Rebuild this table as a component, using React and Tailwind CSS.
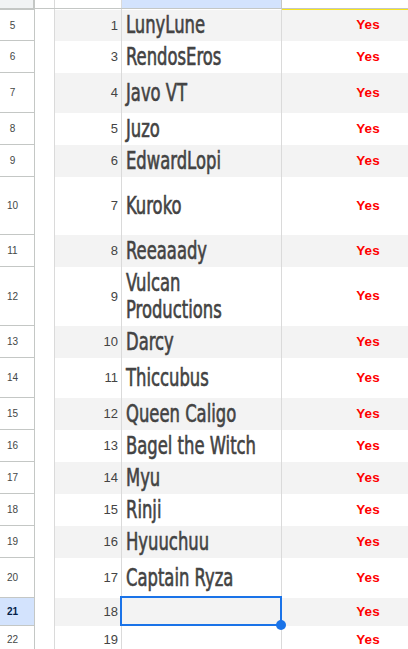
import React from "react";

const rows = [
  { r: 5, h: 31, n: "1", name: "LunyLune" },
  { r: 6, h: 32, n: "3", name: "RendosEros" },
  { r: 7, h: 40, n: "4", name: "Javo VT" },
  { r: 8, h: 32, n: "5", name: "Juzo" },
  { r: 9, h: 32, n: "6", name: "EdwardLopi" },
  { r: 10, h: 58, n: "7", name: "Kuroko" },
  { r: 11, h: 32, n: "8", name: "Reeaaady" },
  { r: 12, h: 59, n: "9", name: ["Vulcan", "Productions"] },
  { r: 13, h: 32, n: "10", name: "Darcy" },
  { r: 14, h: 40, n: "11", name: "Thiccubus" },
  { r: 15, h: 32, n: "12", name: "Queen Caligo" },
  { r: 16, h: 32, n: "13", name: "Bagel the Witch" },
  { r: 17, h: 32, n: "14", name: "Myu" },
  { r: 18, h: 32, n: "15", name: "Rinji" },
  { r: 19, h: 32, n: "16", name: "Hyuuchuu" },
  { r: 20, h: 40, n: "17", name: "Captain Ryza" },
  { r: 21, h: 28, n: "18", name: "", selected: true },
  { r: 22, h: 28, n: "19", name: "" },
];

function Row({ row, idx }) {
  const band = idx % 2 === 0 ? "bg-[#f3f3f3]" : "bg-white";
  return (
    <div className="flex shrink-0" style={{ height: row.h }}>
      <div
        className={`w-[35px] shrink-0 flex items-center justify-center pr-[9px] border-r border-b border-[#c4c7c5] text-[10px] font-['Liberation_Sans',Arial,sans-serif] ${
          row.selected ? "bg-[#d3e3fd] font-bold text-[#041e49]" : "bg-white text-[#444746]"
        }`}
      >
        {row.r}
      </div>
      <div className="w-[20px] shrink-0 bg-white border-r border-[#dadada]" />
      <div
        className={`w-[67px] shrink-0 flex items-center justify-end pr-[3px] border-r border-[#dadada] text-[13px] text-[#444] font-['Liberation_Sans',Arial,sans-serif] ${band}`}
      >
        {row.n}
      </div>
      <div
        className={`w-[160px] shrink-0 flex items-center pl-[4px] border-r border-[#dadada] ${band}`}
      >
        {row.name !== "" && (
          <div className="origin-left scale-x-[0.76] font-['Liberation_Sans_Narrow','DejaVu_Sans_Condensed','Liberation_Sans',sans-serif] text-[24px] leading-[27px] text-[#434343] [-webkit-text-stroke:0.6px_#434343] whitespace-nowrap">
            {Array.isArray(row.name) ? (
              <>
                {row.name[0]}
                <br />
                {row.name[1]}
              </>
            ) : (
              row.name
            )}
          </div>
        )}
      </div>
      <div
        className={`relative w-[172px] shrink-0 flex items-center justify-center text-[13.5px] font-bold text-[#ff0000] font-['Liberation_Sans',Arial,sans-serif] ${band}`}
      >
        Yes
        {row.selected && (
          <div className="absolute z-10 left-[-162px] w-[162px] top-[-2px] bottom-0 border-2 border-[#1a73e8]">
            <div className="absolute right-[-6px] bottom-[-6px] w-[10px] h-[10px] rounded-full bg-[#1a73e8]" />
          </div>
        )}
      </div>
    </div>
  );
}

export default function App() {
  return (
    <div className="w-[408px] h-[649px] overflow-hidden bg-white flex flex-col">
      <div className="flex shrink-0 h-[9px] border-b border-[#c4c7c5]">
        <div className="w-[35px] shrink-0 bg-[#f1f3f4] border-r-2 border-[#c4c7c5]" />
        <div className="w-[20px] shrink-0 bg-white border-r border-[#dadada]" />
        <div className="w-[67px] shrink-0 bg-white border-r border-[#dadada]" />
        <div className="w-[160px] shrink-0 bg-[#d3e3fd] border-r border-[#c4c7c5]" />
        <div className="w-[172px] shrink-0 bg-white" />
      </div>
      <div className="flex shrink-0 h-[1px]">
        <div className="w-[35px] shrink-0 bg-[#c4c7c5]" />
        <div className="w-[20px] shrink-0 bg-white border-r border-[#dadada]" />
        <div className="w-[67px] shrink-0 bg-white border-r border-[#dadada]" />
        <div className="w-[160px] shrink-0 bg-white border-r border-[#dadada]" />
        <div className="w-[172px] shrink-0 bg-[#f7e51a]" />
      </div>
      {rows.map((row, i) => (
        <Row key={row.r} row={row} idx={i} />
      ))}
    </div>
  );
}
